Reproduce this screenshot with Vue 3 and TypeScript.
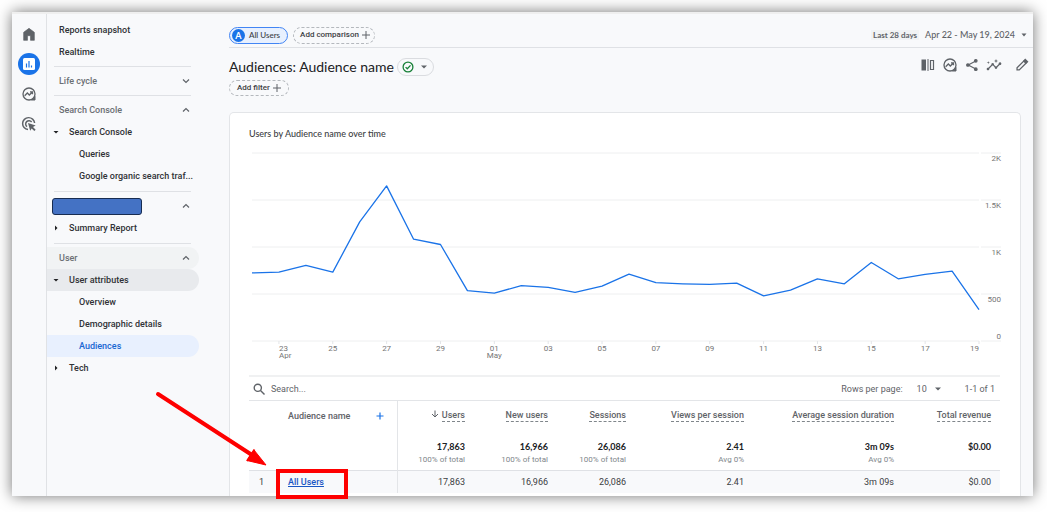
<script setup lang="ts">
import { ref } from 'vue'

interface NavItem {
  label: string
  level: 'top' | 'parent' | 'child'
  open?: boolean
  state?: 'trail' | 'active'
}
interface NavGroup {
  title?: string
  masked?: boolean
  open?: boolean
  hovered?: boolean
  items: NavItem[]
}

const groups: NavGroup[] = [
  { items: [{ label: 'Reports snapshot', level: 'top' }, { label: 'Realtime', level: 'top' }] },
  { title: 'Life cycle', open: false, items: [] },
  {
    title: 'Search Console',
    open: true,
    items: [
      { label: 'Search Console', level: 'parent', open: true },
      { label: 'Queries', level: 'child' },
      { label: 'Google organic search traf...', level: 'child' },
    ],
  },
  { masked: true, open: true, items: [{ label: 'Summary Report', level: 'parent', open: false }] },
  {
    title: 'User',
    open: true,
    hovered: true,
    items: [
      { label: 'User attributes', level: 'parent', open: true, state: 'trail' },
      { label: 'Overview', level: 'child' },
      { label: 'Demographic details', level: 'child' },
      { label: 'Audiences', level: 'child', state: 'active' },
      { label: 'Tech', level: 'parent', open: false },
    ],
  },
]

const values: number[] = [
  725, 733, 804, 733, 1267, 1650, 1083, 1027, 535, 510, 588, 570, 517, 584, 712, 620, 609, 602,
  616, 481, 542, 662, 609, 835, 662, 708, 743, 333,
]
const left = 3
const right = 730
const base = 192
const plotHeight = 188
const px = (i: number): number => left + ((right - left) * i) / (values.length - 1)
const py = (v: number): number => base - (v / 2000) * plotHeight
const line = values.map((v, i) => `${px(i).toFixed(1)},${py(v).toFixed(1)}`).join(' ')

const yTicks = [
  { v: 2000, label: '2K' },
  { v: 1500, label: '1.5K' },
  { v: 1000, label: '1K' },
  { v: 500, label: '500' },
  { v: 0, label: '0' },
]
const xTicks = ['23', '25', '27', '29', '01', '03', '05', '07', '09', '11', '13', '15', '17', '19'].map(
  (label, k) => ({
    label,
    x: px(1 + k * 2),
    anchor: k === 0 ? 'start' : k === 13 ? 'end' : 'middle',
    month: label === '23' ? 'Apr' : label === '01' ? 'May' : '',
  }),
)

const metrics = [
  { name: 'Users', total: '17,863', note: '100% of total', value: '17,863', sorted: true },
  { name: 'New users', total: '16,966', note: '100% of total', value: '16,966' },
  { name: 'Sessions', total: '26,086', note: '100% of total', value: '26,086' },
  { name: 'Views per session', total: '2.41', note: 'Avg 0%', value: '2.41' },
  { name: 'Average session duration', total: '3m 09s', note: 'Avg 0%', value: '3m 09s' },
  { name: 'Total revenue', total: '$0.00', note: '', value: '$0.00' },
]

const search = ref('')
const rows = ref('10')
</script>

<template>
  <div class="page">
    <div class="window">
      <nav class="rail" aria-label="Product">
        <a href="#" class="rail-link" aria-label="Home">
          <svg width="16" height="16" viewBox="0 0 24 24"><path d="M4 21.500V9.500L12 3.500l8 6v12h-5.700v-7h-4.600v7z" fill="#5f6368" stroke="#5f6368" stroke-linejoin="round" /></svg>
        </a>
        <a href="#" class="rail-link current" aria-label="Reports">
          <svg width="12" height="12" viewBox="0 0 12 12">
            <rect width="12" height="12" rx="1.500" fill="#fff" />
            <path d="M3.500 5.500v4M6 3v6.500M8.500 7.500v2" stroke="#1a73e8" stroke-width="1.200" fill="none" />
          </svg>
        </a>
        <a href="#" class="rail-link" aria-label="Explore">
          <svg width="16" height="16" viewBox="0 0 24 24" fill="none" stroke="#5f6368" stroke-width="2">
            <circle cx="12" cy="12" r="9" />
            <path d="M5.500 14.500l4-4 3 3 4.500-4.500M13.500 8.800h3.700v3.700" />
            <path d="M21 16v5h-5c2.300-1 4-2.700 5-5z" fill="#5f6368" stroke-width="1.500" />
          </svg>
        </a>
        <a href="#" class="rail-link" aria-label="Advertising">
          <svg width="16" height="16" viewBox="0 0 24 24" fill="none" stroke="#5f6368" stroke-width="2.200">
            <path d="M10.500 20.400A9 9 0 1 1 20.400 10.500" />
            <path d="M9 16A5 5 0 1 1 16 9" />
            <path d="M10.500 10.500l11.500 3.700-4 2.400 4 4-2 2-4-4-2.200 3.700z" fill="#5f6368" stroke="none" />
          </svg>
        </a>
      </nav>

      <nav class="side" aria-label="Reports">
        <div v-for="(g, gi) in groups" :key="gi" class="group">
          <button v-if="gi > 0" type="button" class="group-head" :class="{ hovered: g.hovered }">
            <span v-if="g.masked" class="mask"></span>
            <span v-else>{{ g.title }}</span>
            <svg width="8" height="8" viewBox="0 0 8 8" fill="none" stroke="#5f6368" stroke-width="1.200">
              <path :d="g.open ? 'M1 5.500L4 2.500l3 3' : 'M1 2.500l3 3 3-3'" />
            </svg>
          </button>
          <ul v-if="g.items.length" class="items">
            <li v-for="it in g.items" :key="it.label">
              <a href="#" class="item" :class="[it.level, it.state]">
                <svg v-if="it.level === 'parent'" class="twist" width="6" height="6" viewBox="0 0 6 6">
                  <path :d="it.open ? 'M.5 2h5L3 4.500z' : 'M2 .5v5L4.500 3z'" fill="#202124" />
                </svg>
                {{ it.label }}
              </a>
            </li>
          </ul>
        </div>
      </nav>

      <main class="main">
        <header class="topbar">
          <button type="button" class="chip all"><span class="badge">A</span>All Users</button>
          <button type="button" class="chip dashed">
            Add comparison
            <svg width="8" height="8" viewBox="0 0 8 8"><path d="M4 0v8M0 4h8" stroke="#5f6368" /></svg>
          </button>
          <button type="button" class="dates">
            <span class="preset">Last 28 days</span>
            <span>Apr 22 - May 19, 2024</span>
            <svg width="6" height="4" viewBox="0 0 6 4"><path d="M.5.5h5L3 3.500z" fill="#5f6368" /></svg>
          </button>
        </header>

        <div class="heading">
          <h1>Audiences: Audience name</h1>
          <button type="button" class="status" aria-label="Data quality">
            <svg width="12" height="12" viewBox="0 0 12 12" fill="none" stroke="#188038" stroke-width="1.300">
              <circle cx="6" cy="6" r="4.900" />
              <path d="M3.600 6.100l1.700 1.700 3.200-3.400" />
            </svg>
            <svg width="6" height="4" viewBox="0 0 6 4"><path d="M0 .5h6L3 3.500z" fill="#5f6368" /></svg>
          </button>
          <div class="tools">
            <button type="button" aria-label="Edit comparisons">
              <svg width="14" height="14" viewBox="0 0 14 14"><path d="M.5 1.500h4.500v11H.5z" fill="#5f6368" /><path d="M7 1v12" stroke="#5f6368" /><path d="M9.500 2.500h3v9h-3z" fill="none" stroke="#5f6368" stroke-width="1.200" /></svg>
            </button>
            <button type="button" aria-label="Explore">
              <svg width="16" height="16" viewBox="0 0 24 24" fill="none" stroke="#5f6368" stroke-width="2">
                <circle cx="12" cy="12" r="9" />
                <path d="M5.500 14.500l4-4 3 3 4.500-4.500M13.500 8.800h3.700v3.700" />
                <path d="M21 16v5h-5c2.300-1 4-2.700 5-5z" fill="#5f6368" stroke-width="1.500" />
              </svg>
            </button>
            <button type="button" aria-label="Share">
              <svg width="14" height="14" viewBox="0 0 24 24" fill="none" stroke="#5f6368" stroke-width="2">
                <path d="M18.500 5L5.500 12l13 7" />
                <g fill="#5f6368"><circle cx="18.500" cy="4.800" r="2.200" /><circle cx="5" cy="12" r="2.200" /><circle cx="18.500" cy="19.200" r="2.200" /></g>
              </svg>
            </button>
            <button type="button" aria-label="Insights">
              <svg width="16" height="16" viewBox="0 0 24 24" fill="#5f6368">
                <path d="M21 8c-1.450 0-2.260 1.440-1.930 2.510l-3.550 3.560c-.3-.09-.74-.09-1.040 0l-2.550-2.550C12.270 10.450 11.460 9 10 9c-1.450 0-2.270 1.440-1.930 2.520l-4.560 4.550C2.440 15.740 1 16.550 1 18c0 1.100.9 2 2 2 1.450 0 2.260-1.440 1.930-2.510l4.550-4.560c.3.09.74.09 1.040 0l2.550 2.550C12.730 16.550 13.540 18 15 18c1.450 0 2.270-1.440 1.930-2.520l3.560-3.550C21.560 12.260 23 11.450 23 10c0-1.100-.9-2-2-2z" />
                <path d="M15 9l.94-2.070L18 6l-2.060-.93L15 3l-.92 2.070L12 6l2.080.93zM3.500 11L4 9l2-.5L4 8l-.5-2L3 8l-2 .5L3 9z" />
              </svg>
            </button>
            <button type="button" class="edit" aria-label="Customize report">
              <svg width="14" height="14" viewBox="0 0 24 24" fill="none" stroke="#5f6368" stroke-width="2.200">
                <path d="M3.500 20.500v-3.800L15 5.200l3.800 3.800L7.300 20.500z" />
                <path d="M15.500 4.500l2-2 4 4-2 2z" fill="#5f6368" />
              </svg>
            </button>
          </div>
        </div>

        <button type="button" class="chip dashed filter">
          Add filter
          <svg width="8" height="8" viewBox="0 0 8 8"><path d="M4 0v8M0 4h8" stroke="#5f6368" /></svg>
        </button>

        <section class="card">
          <h2>Users by Audience name over time</h2>
          <svg class="chart" viewBox="0 0 751 214" role="img" aria-label="Users by Audience name over time">
            <g v-for="t in yTicks" :key="t.label">
              <path :d="`M3 ${py(t.v)}H730M732 ${py(t.v)}H752`" stroke="#eeeff0" />
              <text x="752" :y="py(t.v) + (t.v === 0 ? -2 : 8)" text-anchor="end">{{ t.label }}</text>
            </g>
            <g v-for="t in xTicks" :key="t.label">
              <path :d="`M${t.x} 192v3`" stroke="#e3e5e8" />
              <text :x="t.x" y="202" :text-anchor="t.anchor">{{ t.label }}</text>
              <text v-if="t.month" :x="t.x" y="209" :text-anchor="t.anchor">{{ t.month }}</text>
            </g>
            <polyline :points="line" fill="none" stroke="#1a73e8" stroke-width="1.300" stroke-linejoin="round" />
          </svg>

          <div class="table-bar">
            <label class="search">
              <svg width="12" height="12" viewBox="0 0 12 12" fill="none" stroke="#5f6368" stroke-width="1.400">
                <circle cx="4.800" cy="4.800" r="3.600" />
                <path d="M7.500 7.500l4 4" />
              </svg>
              <input v-model="search" type="text" placeholder="Search..." aria-label="Search" />
            </label>
            <label class="rows">
              Rows per page:
              <span class="pick">
                <select v-model="rows">
                  <option>10</option>
                  <option>25</option>
                </select>
                <svg width="6" height="4" viewBox="0 0 6 4"><path d="M0 .5h6L3 3.500z" fill="#5f6368" /></svg>
              </span>
            </label>
            <span class="count">1-1 of 1</span>
          </div>

          <table>
            <colgroup>
              <col class="c-num" /><col class="c-name" /><col class="c-users" /><col class="c-new" />
              <col class="c-sess" /><col class="c-views" /><col class="c-dur" /><col class="c-rev" />
            </colgroup>
            <thead>
              <tr class="names">
                <th></th>
                <th class="name" scope="col">
                  <div class="dimension">
                    <span>Audience name</span>
                    <button type="button" aria-label="Add dimension">
                      <svg width="8" height="8" viewBox="0 0 8 8"><path d="M4 .5v7M.5 4h7" stroke="#1a73e8" stroke-width="1.200" /></svg>
                    </button>
                  </div>
                </th>
                <th v-for="m in metrics" :key="m.name" scope="col">
                  <svg v-if="m.sorted" class="sort" width="8" height="8" viewBox="0 0 8 8" fill="none" stroke="#5f6368"><path d="M4 .5v6.500M1 4l3 3 3-3" /></svg>
                  <span class="metric">{{ m.name }}</span>
                </th>
              </tr>
              <tr class="totals">
                <td></td>
                <td class="name"></td>
                <td v-for="m in metrics" :key="m.name">
                  <strong>{{ m.total }}</strong>
                  <small>{{ m.note }}</small>
                </td>
              </tr>
            </thead>
            <tbody>
              <tr>
                <td class="num">1</td>
                <td class="name"><a href="#">All Users</a></td>
                <td v-for="m in metrics" :key="m.name">{{ m.value }}</td>
              </tr>
            </tbody>
          </table>
        </section>
      </main>
    </div>

    <svg class="callout" width="200" height="114" viewBox="0 0 200 114" aria-hidden="true">
      <path d="M8 8L102 69" stroke="#fe0000" stroke-width="4" stroke-linecap="round" />
      <path d="M104 64L116 79L97 74.500z" fill="#fe0000" stroke="#fe0000" stroke-width="1" />
      <path d="M104.500 63.500L97 75" stroke="#fe0000" stroke-width="2" />
      <rect x="128" y="85" width="68" height="26" fill="none" stroke="#fe0000" stroke-width="4" />
    </svg>
  </div>
</template>

<style>
body {
  margin: 0;
  background: #fff;
}
</style>

<style scoped>
.page {
  --ui: Lato, "Open Sans", sans-serif;
  --data: Roboto, "Liberation Sans", sans-serif;
  position: relative;
  box-sizing: border-box;
  min-height: 100vh;
  padding: 12px 14px 16px 12px;
  display: flex;
  overflow: hidden;
  font: 500 9px/12px var(--ui);
  color: #3c4043;
}
.window {
  flex: 1;
  min-width: 0;
  display: flex;
  background: #f8f9fb;
  border-top: 2px solid #efefef;
  box-shadow: 0 0 14px rgba(0, 0, 0, 0.55);
}
button {
  font: inherit;
  color: inherit;
  background: none;
  border: 0;
  margin: 0;
  padding: 0;
}
a {
  color: inherit;
  text-decoration: none;
}
svg {
  display: block;
  flex: none;
}
.rail {
  width: 34px;
  border-right: 1px solid #e0e2e5;
  padding-top: 9px;
  display: flex;
  flex-direction: column;
  align-items: center;
  gap: 8px;
}
.rail-link {
  width: 22px;
  height: 22px;
  border-radius: 50%;
  display: flex;
  align-items: center;
  justify-content: center;
}
.rail-link.current {
  background: #1a73e8;
}
.side {
  width: 152px;
  padding-top: 5px;
  margin-right: 30px;
  flex: none;
  font-family: var(--data);
}
.group + .group::before {
  content: "";
  display: block;
  height: 1px;
  margin: 3px 8px 3px 7px;
  background: #dfe1e5;
}
.items {
  list-style: none;
  margin: 0;
  padding: 0 0 1px;
}
.group:first-child .items {
  padding: 0;
}
.group-head {
  width: 100%;
  height: 22px;
  padding: 0 9px 0 12px;
  display: flex;
  align-items: center;
  justify-content: space-between;
  color: #6b6f74;
  border-radius: 0 11px 11px 0;
}
.group-head.hovered {
  background: #f1f3f4;
}
.mask {
  box-sizing: border-box;
  width: 90px;
  height: 17px;
  margin-left: -7px;
  background: #4472c4;
  border: 1px solid #172c51;
  border-radius: 3px;
}
.item {
  height: 22px;
  display: flex;
  align-items: center;
  white-space: nowrap;
  color: #303236;
  border-radius: 0 11px 11px 0;
}
.top {
  padding-left: 12px;
}
.parent {
  padding-left: 6px;
  gap: 10px;
}
.child {
  padding-left: 32px;
}
.trail {
  background: #e8eaed;
}
.active {
  background: #e8f0fe;
  color: #1967d2;
}
.main {
  flex: 1;
  min-width: 0;
  display: flex;
  flex-direction: column;
}
.topbar {
  display: flex;
  align-items: center;
  gap: 5px;
  height: 20px;
  padding: 11px 6px 2px 0;
  border-bottom: 1px solid #dfe1e5;
}
.chip {
  box-sizing: border-box;
  height: 17px;
  border: 1px solid #4285f4;
  border-radius: 9px;
  display: flex;
  align-items: center;
  font: 500 8px/12px var(--data);
  white-space: nowrap;
}
.all {
  background: #e8f0fe;
  padding: 0 7px 0 2px;
  gap: 4px;
  font-family: var(--ui);
}
.badge {
  width: 13px;
  height: 13px;
  border-radius: 50%;
  background: #1a73e8;
  color: #fff;
  text-align: center;
  font: 700 9px/13px var(--ui);
}
.dashed {
  border: 1px dashed #b4b8bd;
  padding: 0 4px 0 6px;
  gap: 3px;
}
.dates {
  margin-left: auto;
  display: flex;
  align-items: center;
  gap: 6px;
  color: #5f6368;
  white-space: nowrap;
}
.preset {
  background: #f1f3f4;
  font: 700 8px/10px var(--ui);
  padding: 0 2px;
}
.heading {
  display: flex;
  align-items: center;
  height: 18px;
  margin-top: 10px;
}
h1 {
  margin: 0;
  font: 400 14px/18px var(--ui);
  color: #202124;
  white-space: nowrap;
}
.status {
  box-sizing: border-box;
  width: 37px;
  height: 18px;
  margin-left: 3px;
  padding: 0 6px 0 4px;
  border: 1px solid #dadce0;
  border-radius: 9px;
  display: flex;
  align-items: center;
  justify-content: space-between;
}
.tools {
  margin-left: auto;
  display: flex;
  gap: 6px;
  padding: 0 3px 4px 0;
}
.tools button {
  width: 16px;
  height: 16px;
  display: flex;
  align-items: center;
  justify-content: center;
}
.tools .edit {
  margin-left: 6px;
}
.filter {
  align-self: flex-start;
  height: 16px;
  margin-top: 4px;
  padding: 0 7px;
}
.card {
  flex: 1;
  margin: 16px 12px 0 0;
  padding: 15px 20px 3px 19px;
  background: #fff;
  border: 1px solid #e3e5e8;
  border-bottom: 0;
  border-radius: 5px 5px 0 0;
}
h2 {
  margin: 0;
  font: 500 9px/12px var(--ui);
}
.chart {
  width: 100%;
  height: auto;
  margin-top: 9px;
  overflow: visible;
}
.chart text {
  font: 400 8px var(--data);
  fill: #757575;
}
.table-bar {
  margin-top: 12px;
  height: 23px;
  border-top: 2px solid #f0f1f2;
  display: flex;
  align-items: center;
  padding: 0 5px 0 4px;
  font: 400 9px/12px var(--data);
}
.search {
  flex: 1;
  display: flex;
  align-items: center;
  gap: 6px;
}
.search input {
  flex: 1;
  min-width: 0;
  border: 0;
  padding: 0;
  outline: 0;
  background: none;
  font: inherit;
}
.search input::placeholder {
  color: #5f6368;
  opacity: 1;
}
.rows {
  display: flex;
  align-items: center;
  gap: 14px;
  color: #5f6368;
}
.pick {
  display: flex;
  align-items: center;
  gap: 7px;
}
select {
  appearance: none;
  border: 0;
  padding: 0;
  background: none;
  font: inherit;
  color: inherit;
}
.count {
  margin-left: 24px;
  color: #5f6368;
}
table {
  width: 100%;
  table-layout: fixed;
  border-collapse: collapse;
  font: 400 9px/12px var(--data);
}
.c-num { width: 24px; }
.c-name { width: 124px; }
.c-users { width: 77px; }
.c-new { width: 83px; }
.c-sess { width: 78px; }
.c-views { width: 118px; }
.c-dur { width: 150px; }
th,
td {
  padding: 0 9px 0 0;
  text-align: right;
  vertical-align: top;
  white-space: nowrap;
  font-weight: 400;
}
.names th {
  height: 31px;
  padding-top: 8px;
  border-top: 1px solid #e3e5e8;
  font-weight: 500;
  color: #5f6368;
}
.name {
  text-align: left;
  padding-left: 15px;
  border-right: 1px solid #e3e5e8;
}
.dimension {
  display: flex;
  justify-content: space-between;
  padding: 1px 4px 0 0;
}
.metric {
  display: inline-block;
  border-bottom: 1px dashed #80868b;
}
.sort {
  display: inline-block;
  margin-right: 3px;
}
.totals td {
  height: 30px;
}
strong {
  display: block;
  font: 700 9px/14px var(--ui);
  color: #202124;
}
small {
  display: block;
  font: 400 8px/12px var(--data);
  color: #80868b;
}
tbody td {
  height: 22px;
  vertical-align: middle;
  background: #f8f9fb;
  border-top: 1px solid #dfe1e5;
}
tbody .num {
  padding-right: 9px;
}
tbody a {
  color: #1a56c4;
  font-weight: 500;
  text-decoration: underline;
}
.callout {
  position: absolute;
  left: 150px;
  top: 386px;
  pointer-events: none;
}
</style>
